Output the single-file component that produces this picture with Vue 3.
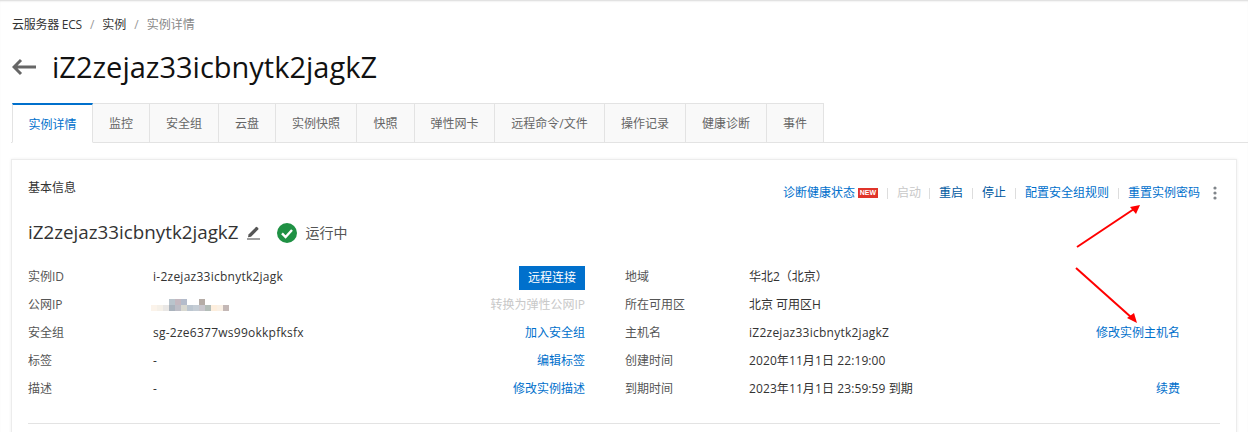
<script setup>
const tabs = [
  { name: '实例详情', w: 81, active: true },
  { name: '监控', w: 57 },
  { name: '安全组', w: 69 },
  { name: '云盘', w: 57 },
  { name: '实例快照', w: 81 },
  { name: '快照', w: 58 },
  { name: '弹性网卡', w: 80 },
  { name: '远程命令/文件', w: 110 },
  { name: '操作记录', w: 81 },
  { name: '健康诊断', w: 81 },
  { name: '事件', w: 57 },
]
const left = [
  { k: '实例ID', v: 'i-2zejaz33icbnytk2jagk', btn: '远程连接', cls: 'lat' },
  { k: '公网IP', mosaic: true, off: '转换为弹性公网IP' },
  { k: '安全组', v: 'sg-2ze6377ws99okkpfksfx', a: '加入安全组', cls: 'lat' },
  { k: '标签', v: '-', a: '编辑标签' },
  { k: '描述', v: '-', a: '修改实例描述' },
]
const right = [
  { k: '地域', v: '华北2（北京）' },
  { k: '所在可用区', v: '北京 可用区H' },
  { k: '主机名', v: 'iZ2zejaz33icbnytk2jagkZ', a: '修改实例主机名', cls: 'lat' },
  { k: '创建时间', v: '2020年11月1日 22:19:00', cls: 'date' },
  { k: '到期时间', v: '2023年11月1日 23:59:59 到期', a: '续费', cls: 'date' },
]
const mosaic = [
  [169, 297, 6, 6, '#b9c4cc'], [175, 297, 6, 6, '#c4b8c0'], [181, 297, 6, 6, '#b4bccb'],
  [199, 297, 6, 6, '#b5aca6'],
  [151, 303, 6, 6, '#fbf3ea'], [157, 303, 6, 6, '#f5f0e8'], [163, 303, 6, 6, '#e9e7e5'],
  [169, 303, 6, 6, '#aab3bd'], [175, 303, 6, 6, '#bdbdc6'], [181, 303, 6, 6, '#d8d8d0'],
  [187, 303, 6, 6, '#bcc6d0'], [193, 303, 6, 6, '#c5cdd5'], [199, 303, 6, 6, '#c8c6cc'],
  [205, 303, 6, 6, '#b3bdb8'], [211, 303, 6, 6, '#fdeedd'], [217, 303, 6, 6, '#faf0e4'],
  [223, 303, 6, 6, '#c4b8b6'],
]
</script>

<template>
  <div class="page">
    <nav class="crumbs">
      <span class="c0">云服务器 ECS</span><i>/</i><span class="c1">实例</span><i>/</i><span class="c2">实例详情</span>
    </nav>
    <header class="head">
      <svg class="back" width="24" height="18" viewBox="0 0 24 18">
        <path d="M24 9H2M9 2 2 9l7 7" fill="none" stroke="#666" stroke-width="3" />
      </svg>
      <h1>iZ2zejaz33icbnytk2jagkZ</h1>
    </header>
    <div class="tabs">
      <div
        v-for="t in tabs"
        :key="t.name"
        class="tab"
        :class="{ active: t.active }"
        :style="{ width: t.w + 'px' }"
      >{{ t.name }}</div>
    </div>
    <section class="card">
      <div class="top">
        <h2>基本信息</h2>
        <div class="actions">
          <a>诊断健康状态</a><b class="new">NEW</b>
          <s></s><span class="dis">启动</span>
          <s class="tight"></s><a class="dark">重启</a>
          <s></s><a class="dark">停止</a>
          <s></s><a>配置安全组规则</a>
          <s></s><a>重置实例密码</a>
          <svg class="more" width="4" height="14" viewBox="0 0 4 14">
            <circle cx="2" cy="2" r="1.6" fill="#80858a" />
            <circle cx="2" cy="7" r="1.6" fill="#80858a" />
            <circle cx="2" cy="12" r="1.6" fill="#80858a" />
          </svg>
        </div>
      </div>
      <div class="name">
        <span class="nm">iZ2zejaz33icbnytk2jagkZ</span>
        <svg class="pen" width="15" height="15" viewBox="0 0 15 15">
          <path d="M2.5 9.5 9.8 2.2a1 1 0 0 1 1.4 0l1 1a1 1 0 0 1 0 1.4L5 11.8 2 12.2Z" fill="#555" />
          <path d="M1 14h13" stroke="#777" stroke-width="1.4" />
        </svg>
        <svg class="ok" width="20" height="20" viewBox="0 0 20 20">
          <circle cx="10" cy="10" r="10" fill="#1f9144" />
          <path d="M5 10.3 8.6 14 15 7" fill="none" stroke="#fff" stroke-width="2.4" />
        </svg>
        <span class="st">运行中</span>
      </div>
      <div class="info">
        <div class="col col-l">
          <div v-for="r in left" :key="r.k" class="row">
            <span class="k">{{ r.k }}</span>
            <span class="v" :class="r.cls">
              <svg v-if="r.mosaic" class="mos" width="80" height="12" viewBox="151 297 80 12">
                <rect v-for="(m, i) in mosaic" :key="i" :x="m[0]" :y="m[1]" :width="m[2]" :height="m[3]" :fill="m[4]" />
              </svg>
              <template v-else>{{ r.v }}</template>
            </span>
            <button v-if="r.btn" class="btn">{{ r.btn }}</button>
            <span v-else-if="r.off" class="dis">{{ r.off }}</span>
            <a v-else>{{ r.a }}</a>
          </div>
        </div>
        <div class="col col-r">
          <div v-for="r in right" :key="r.k" class="row">
            <span class="k">{{ r.k }}</span>
            <span class="v" :class="r.cls">{{ r.v }}</span>
            <a v-if="r.a">{{ r.a }}</a>
          </div>
        </div>
      </div>
      <div class="rule"></div>
    </section>
    <svg class="arrows" width="1248" height="432" viewBox="0 0 1248 432">
      <path d="M1077 247 1134 209" stroke="#f00" stroke-width="2" fill="none" />
      <path d="M1140 205 1130 207 1136 214Z" fill="#f00" />
      <path d="M1076 268 1132 318" stroke="#f00" stroke-width="2" fill="none" />
      <path d="M1137 323 1127 318 1134 313Z" fill="#f00" />
    </svg>
  </div>
</template>

<style>
body { margin: 0; background: #fff; }
</style>

<style scoped>
.page {
  position: relative;
  width: 1248px;
  height: 432px;
  overflow: hidden;
  box-sizing: border-box;
  padding: 17px 11px 0 11px;
  background: #fff;
  font: 12px/16px "Open Sans", "Noto Sans CJK SC", sans-serif;
  color: #333;
  box-shadow: inset 0 2px 2px -1px #d8d8d8;
}
.crumbs { display: flex; align-items: center; height: 16px; padding-left: 1px; }
.crumbs i { font-style: normal; color: #999; margin: 0 8px; }
.c0 { color: #333; letter-spacing: -0.25px; }
.c1 { color: #333; }
.c2 { color: #888; }
.head { display: flex; align-items: center; height: 40px; margin-top: 14px; padding-left: 1px; }
.back { flex: none; margin-right: 16px; }
h1 { margin: 0; font-size: 29px; font-weight: 400; line-height: 40px; color: #111; }
.tabs {
  display: flex;
  margin: 16px -11px 0 0;
  padding-left: 1px;
  height: 40px;
  box-sizing: border-box;
  border-bottom: 1px solid #e3e3e3;
}
.tab {
  box-sizing: border-box;
  height: 40px;
  padding-top: 2px;
  display: flex;
  align-items: center;
  justify-content: center;
  background: #f9f9f9;
  border: 1px solid #e3e3e3;
  border-left: 0;
  color: #666;
}
.tab.active {
  background: #fff;
  color: #0070cc;
  border-top: 2px solid #0070cc;
  border-left: 1px solid #e3e3e3;
  border-bottom-color: #fff;
}
.card {
  box-sizing: border-box;
  width: 1226px;
  margin-top: 16px;
  height: 300px;
  padding: 20px 16px 0 16px;
  border: 1px solid #ececec;
  border-bottom: 0;
  box-shadow: 0 0 3px #eee;
}
.top { position: relative; display: flex; justify-content: space-between; height: 31px; }
h2 { margin: 0; font-size: 12px; font-weight: 400; color: #333; line-height: 16px; }
.actions { display: flex; align-items: center; height: 16px; margin-top: 5px; }
a { color: #0070cc; white-space: nowrap; }
a.dark { color: #00589f; }
.dis { color: #c8c8c8; white-space: nowrap; }
.new {
  margin-left: 3px;
  width: 20px;
  height: 10px;
  background: #e0342a;
  color: #fff;
  font: 700 7px/10px "Liberation Sans", sans-serif;
  text-align: center;
}
s { display: block; width: 1px; height: 11px; background: #ddd; margin: 0 9px; }
s.tight { margin: 0 9px 0 8px; }
.more { margin-left: 13px; margin-right: 3px; }
.name { display: flex; align-items: center; height: 28px; margin-top: 7px; }
.nm { font-size: 18.8px; line-height: 28px; color: #333; }
.pen { margin-left: 8px; }
.ok { margin-left: 16px; margin-top: 2px; }
.st { margin-left: 8px; font-size: 14px; color: #555; margin-top: 2px; }
.info { display: flex; margin-top: 17px; }
.col { flex: none; }
.col-l { width: 557px; margin-right: 40px; }
.col-r { width: 555px; }
.row { display: flex; align-items: center; height: 28px; white-space: nowrap; }
.k { width: 125px; flex: none; color: #555; }
.col-r .k { width: 124px; }
.v { flex: 1; color: #333; display: flex; align-items: center; }
.v.lat { letter-spacing: 0.25px; }
.v.date { letter-spacing: 0.1px; }
.mos { margin-left: -2px; }
.btn {
  box-sizing: border-box;
  width: 66px;
  height: 24px;
  margin-top: 2px;
  padding: 0;
  border: 0;
  background: #0070cc;
  color: #fff;
  font: inherit;
}
.rule { height: 1px; background: #e3e3e3; margin-top: 20px; }
.arrows { position: absolute; left: 0; top: 0; pointer-events: none; }
</style>
